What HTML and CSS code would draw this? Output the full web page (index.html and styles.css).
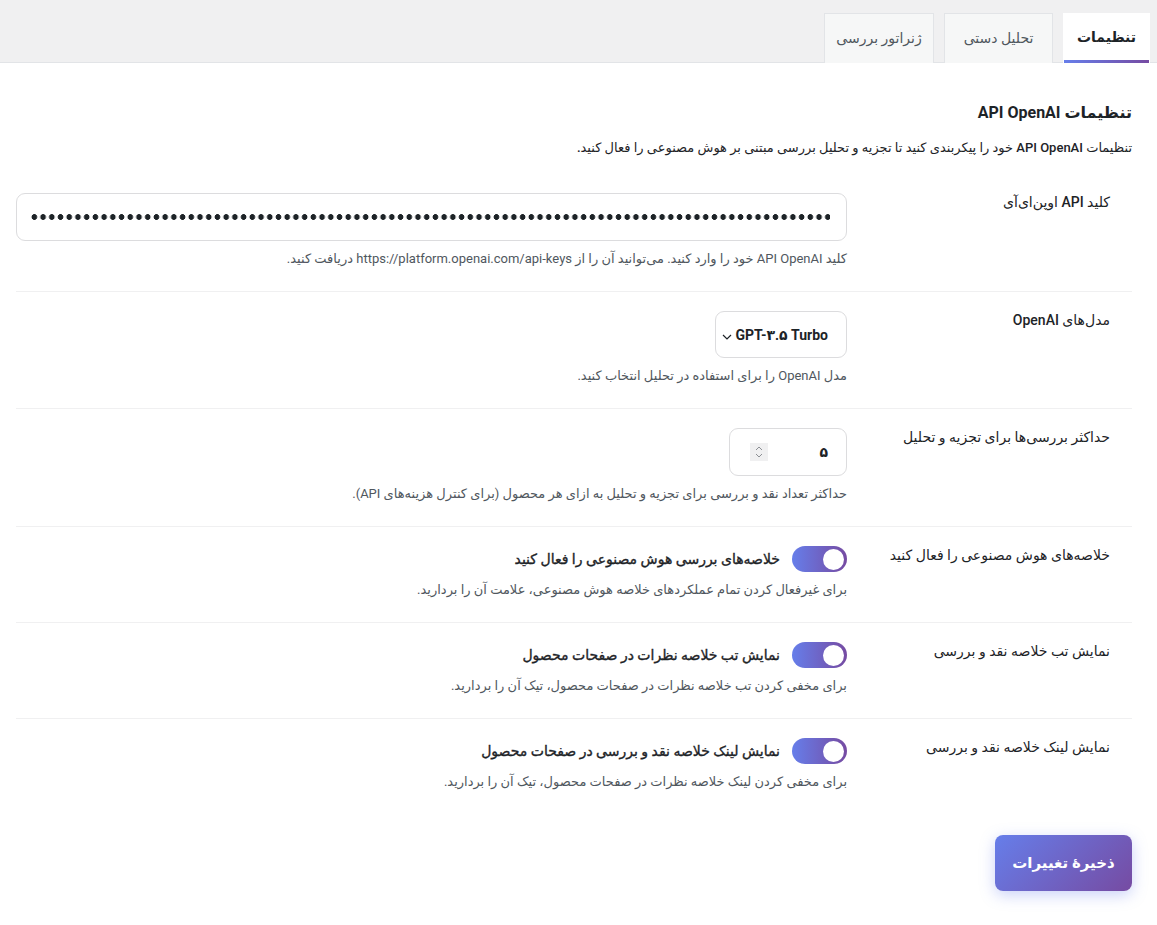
FILE: index.html
```html
<!DOCTYPE html>
<html lang="fa" dir="rtl">
<head>
<meta charset="utf-8">
<title>تنظیمات</title>
<link rel="stylesheet" href="styles.css">
</head>
<body>
<nav class="tabs">
  <a class="tab active">تنظیمات</a>
  <a class="tab t2">تحلیل دستی</a>
  <a class="tab t3">ژنراتور بررسی</a>
</nav>
<main class="content">
  <h2 class="title">تنظیمات API OpenAI</h2>
  <p class="lead">تنظیمات API OpenAI خود را پیکربندی کنید تا تجزیه و تحلیل بررسی مبتنی بر هوش مصنوعی را فعال کنید.</p>

  <div class="rows">
    <div class="row">
      <div class="label">کلید API اوپن‌ای‌آی</div>
      <div class="field">
        <div class="input key" aria-label="password"><span class="dots"></span></div>
        <p class="desc">کلید API OpenAI خود را وارد کنید. می‌توانید آن را از https://platform.openai.com/api-keys دریافت کنید.</p>
      </div>
    </div>

    <div class="row">
      <div class="label">مدل‌های OpenAI</div>
      <div class="field">
        <div class="input select"><span>GPT-۳.۵ Turbo</span>
          <svg class="chev" width="10" height="8" viewBox="0 0 10 8"><path d="M1 2 L5 6 L9 2" fill="none" stroke="#1d2327" stroke-width="1.2"/></svg>
        </div>
        <p class="desc">مدل OpenAI را برای استفاده در تحلیل انتخاب کنید.</p>
      </div>
    </div>

    <div class="row">
      <div class="label">حداکثر بررسی‌ها برای تجزیه و تحلیل</div>
      <div class="field">
        <div class="input number"><span>۵</span>
          <span class="spin"><svg width="18" height="18" viewBox="0 0 18 18"><path d="M6 7 L9 4 L12 7 M6 11 L9 14 L12 11" fill="none" stroke="#8c8f94" stroke-width="1"/></svg></span>
        </div>
        <p class="desc">حداکثر تعداد نقد و بررسی برای تجزیه و تحلیل به ازای هر محصول (برای کنترل هزینه‌های API).</p>
      </div>
    </div>

    <div class="row">
      <div class="label">خلاصه‌های هوش مصنوعی را فعال کنید</div>
      <div class="field">
        <div class="toggle-line"><span class="toggle"><span class="knob"></span></span><span class="toggle-text">خلاصه‌های بررسی هوش مصنوعی را فعال کنید</span></div>
        <p class="desc">برای غیرفعال کردن تمام عملکردهای خلاصه هوش مصنوعی، علامت آن را بردارید.</p>
      </div>
    </div>

    <div class="row">
      <div class="label">نمایش تب خلاصه نقد و بررسی</div>
      <div class="field">
        <div class="toggle-line"><span class="toggle"><span class="knob"></span></span><span class="toggle-text">نمایش تب خلاصه نظرات در صفحات محصول</span></div>
        <p class="desc">برای مخفی کردن تب خلاصه نظرات در صفحات محصول، تیک آن را بردارید.</p>
      </div>
    </div>

    <div class="row last">
      <div class="label">نمایش لینک خلاصه نقد و بررسی</div>
      <div class="field">
        <div class="toggle-line"><span class="toggle"><span class="knob"></span></span><span class="toggle-text">نمایش لینک خلاصه نقد و بررسی در صفحات محصول</span></div>
        <p class="desc">برای مخفی کردن لینک خلاصه نظرات در صفحات محصول، تیک آن را بردارید.</p>
      </div>
    </div>
  </div>

  <div class="actions"><button class="save">ذخیرهٔ تغییرات</button></div>
</main>
</body>
</html>
```
FILE: styles.css
```css
* { box-sizing: border-box; }
html, body { margin: 0; padding: 0; background: #fff; }
body {
  font-family: Roboto, "DejaVu Sans", sans-serif;
  color: #1d2327;
  font-size: 14px;
}
.tabs {
  display: flex;
  gap: 10px;
  height: 63px;
  padding: 13px 7px 0 0;
  background: #f0f0f1;
  border-bottom: 1px solid #e2e4e7;
  align-items: stretch;
}
.tab {
  display: flex;
  align-items: center;
  justify-content: center;
  width: 110px;
  padding: 0 0 2px;
  background: #f6f7f7;
  border: 1px solid #e2e4e7;
  border-bottom: none;
  color: #50575e;
  font-size: 14px;
  font-weight: 500;
  margin-bottom: -1px;
  white-space: nowrap;
}
.tab.t2 { width: 109px; }
.tab.active {
  width: 87px;
  background: #fff;
  color: #1d2327;
  font-weight: 700;
  padding-bottom: 0;
  border-bottom: 3px solid transparent;
  border-image: linear-gradient(90deg, #667eea, #764ba2) 1;
  border-image-slice: 0 0 1 0;
}
.content { padding: 0 25px 30px 16px; }
.title {
  margin: 39px 0 0;
  font-size: 16px;
  font-weight: 700;
  line-height: 22px;
}
.lead {
  margin: 14px 0 0;
  font-size: 13px;
  font-weight: 500;
  line-height: 20px;
}
.rows { margin-top: 16px; }
.row {
  display: grid;
  grid-template-columns: 285px minmax(0, 1fr);
  padding: 19px 0 23px;
  border-bottom: 1px solid #f0f0f1;
}
.row.last { border-bottom: none; }
.label {
  padding: 0 22px 0 0;
  font-size: 14px;
  line-height: 18px;
  font-weight: 500;
}
.field { display: flex; flex-direction: column; align-items: flex-start; min-width: 0; }
.input {
  border: 1px solid #dcdcde;
  border-radius: 9px;
  background: #fff;
  height: 48px;
  display: flex;
  align-items: center;
}
.key { width: 100%; padding: 0 16px 0 13px; direction: ltr; }
.dots {
  display: block;
  flex: 1;
  height: 8px;
  background-image: radial-gradient(circle, #1d2327 2.6px, transparent 3.1px);
  background-size: 8.72px 8px;
  background-repeat: repeat-x;
}
.select { width: 132px; height: 47px; padding: 0 18px 0 6px; justify-content: space-between; font-weight: 700; direction: rtl; }
.select span { direction: ltr; }
.chev { margin-top: 4px; }
.number { width: 118px; padding: 0 18px 0 20px; justify-content: space-between; font-weight: 700; }
.spin { width: 18px; height: 18px; background: #f0f0f1; display: block; }
.spin svg { display: block; }
.desc {
  margin: 9px 0 0;
  font-size: 13px;
  line-height: 18px;
  color: #50575e;
}
.toggle-line { display: flex; align-items: center; gap: 12px; height: 26px; }
.toggle {
  width: 55px; height: 26px; border-radius: 13px;
  background: linear-gradient(90deg, #667eea, #764ba2);
  display: flex; align-items: center; justify-content: flex-start; padding: 0 3px;
}
.knob { width: 21px; height: 21px; border-radius: 50%; background: #fff; }
.toggle-text { font-weight: 400; font-size: 14px; -webkit-text-stroke: 0.35px #1d2327; }
.actions { display: flex; padding-top: 21px; }
.save {
  width: 137px; height: 56px;
  border: none; border-radius: 8px;
  background: linear-gradient(135deg, #667eea, #764ba2);
  color: #fff; font-family: inherit; font-size: 15px; font-weight: 700;
  box-shadow: 0 4px 15px rgba(102, 126, 234, 0.35);
}
```
